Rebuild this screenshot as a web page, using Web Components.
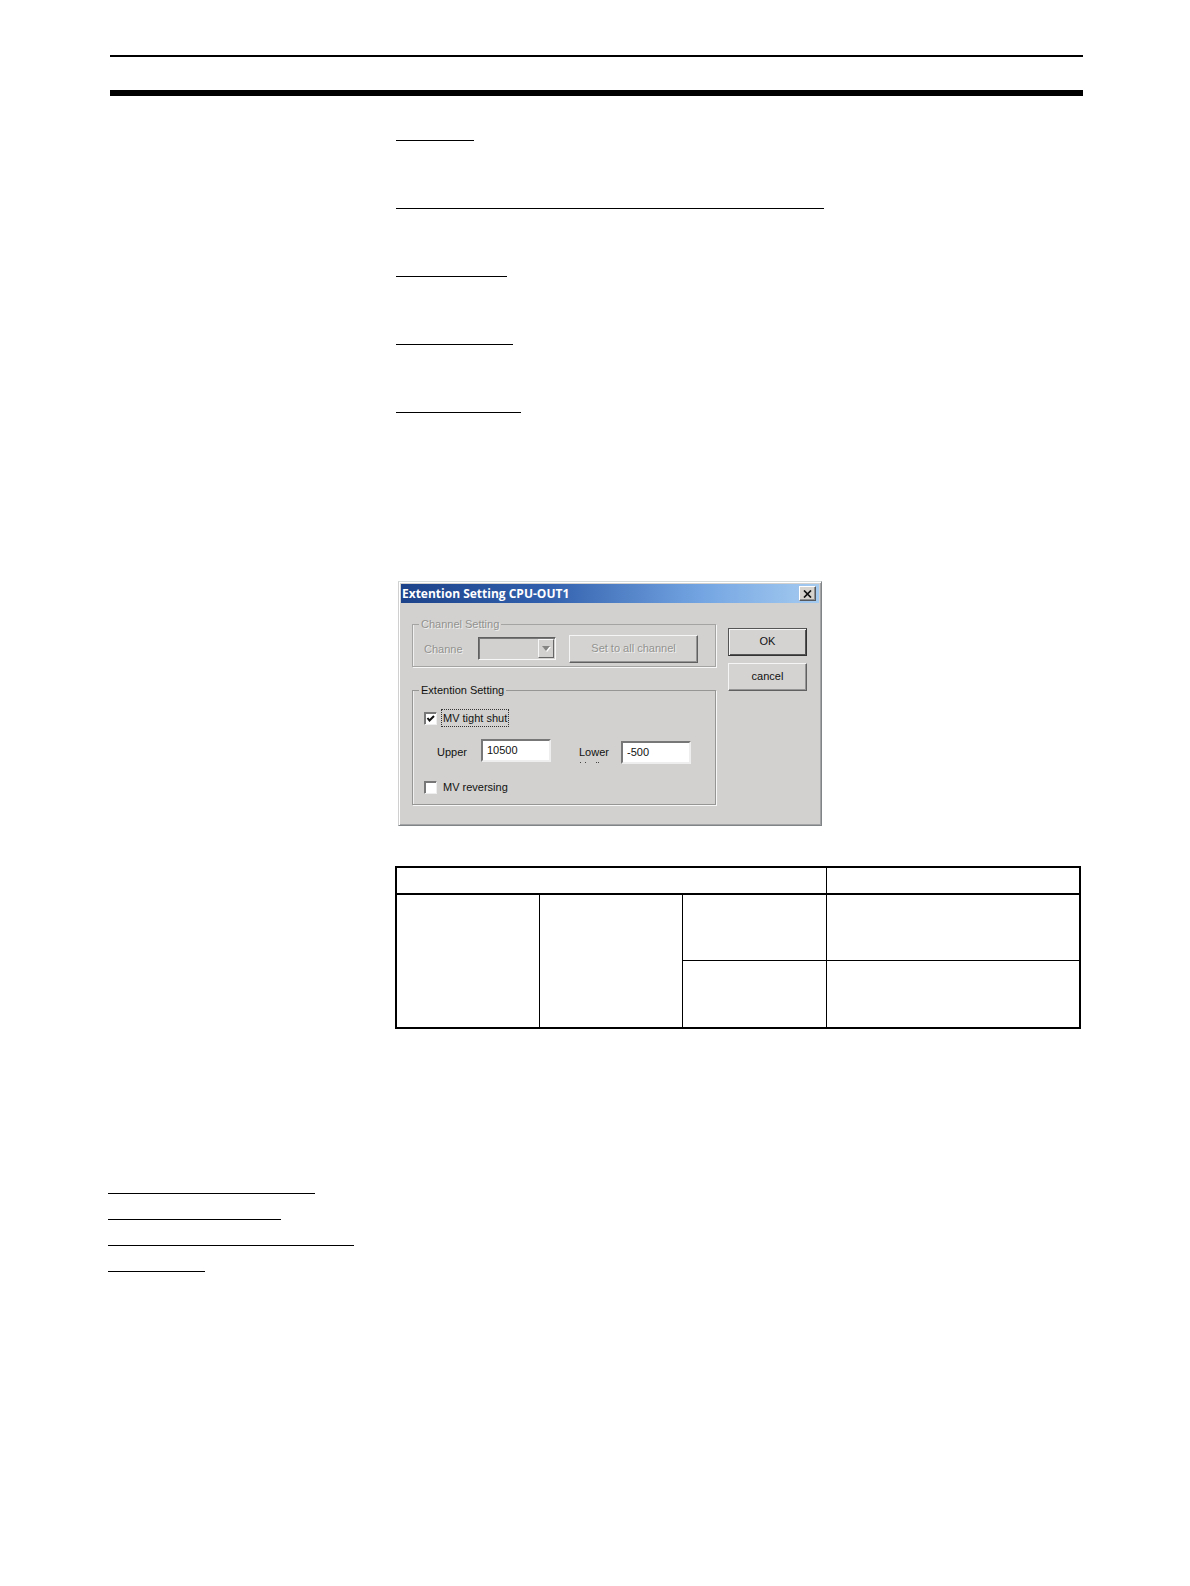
<!DOCTYPE html>
<html lang="en">
<head>
<meta charset="utf-8">
<title>Extention Setting</title>
<style>
body { margin: 0; background: #fff; color: #111; font: 11px/14px "Liberation Sans", Arial, sans-serif; }
</style>
</head>
<body>
<manual-page>
  <rule-list slot="side" gap="25" widths="207,173,246,97"></rule-list>
  <rule-list slot="top" gap="67" widths="78,428,111,117,125"></rule-list>
  <setting-dialog slot="figure" heading="Extention Setting CPU-OUT1">
    <group-box label="Channel Setting" muted>
      <channel-row></channel-row>
    </group-box>
    <group-box label="Extention Setting">
      <limit-form></limit-form>
    </group-box>
    <push-button slot="actions" primary>OK</push-button>
    <push-button slot="actions">cancel</push-button>
  </setting-dialog>
  <setting-table slot="table"></setting-table>
</manual-page>
<script>
function define(name, html, setup) {
  const template = document.createElement('template');
  template.innerHTML = html;
  customElements.define(name, class extends HTMLElement {
    constructor() {
      super();
      this.attachShadow({ mode: 'open' }).append(template.content.cloneNode(true));
    }
    connectedCallback() { if (setup) setup(this, this.shadowRoot); }
  });
}

define('manual-page', `
<style>
  :host { display: block; padding: 55px 107px 64px 108px; }
  header { margin-left: 2px; height: 33px; border-top: 2px solid #000; border-bottom: 6px solid #000; }
  main { display: grid; grid-template-columns: 287px 1fr; }
  .content { display: flex; flex-direction: column; padding: 44px 2px 0 0; }
  .top { padding-left: 1px; }
  .figure { padding: 168px 0 40px 3px; }
  .side { padding-top: 164px; }
</style>
<header></header>
<main>
  <span></span>
  <section class="content">
    <div class="top"><slot name="top"></slot></div>
    <div class="figure"><slot name="figure"></slot></div>
    <slot name="table"></slot>
  </section>
</main>
<div class="side"><slot name="side"></slot></div>`);

define('rule-list', `
<style>
  :host { display: flex; flex-direction: column; align-items: flex-start; }
  hr { margin: 0; border: 0; height: 1px; background: #000; max-width: 100%; }
</style>`, (host, root) => {
  host.style.gap = host.getAttribute('gap') + 'px';
  for (const width of host.getAttribute('widths').split(',')) {
    const rule = document.createElement('hr');
    rule.style.width = width + 'px';
    root.append(rule);
  }
});

define('setting-dialog', `
<style>
  :host { display: block; box-sizing: border-box; width: 424px; background: #d2d1cf;
    border: 1px solid; border-color: #d6dcdc #808487 #808487 #d0d0d0;
    box-shadow: inset 1px 1px #fff, inset -1px -1px #a2a4a6; padding: 2px; }
  header { display: flex; align-items: center; justify-content: space-between; height: 19px; padding: 0 3px 0 1px;
    background: linear-gradient(90deg, #1c438a, #3260ad 35%, #74a5e2 72%, #a5cbf0); }
  h1 { margin: 0; color: #fff; font: bold 12px/18px "Open Sans", "DejaVu Sans", sans-serif; }
  .close { display: flex; align-items: center; justify-content: center; box-sizing: border-box; width: 17px; height: 15px; padding: 0;
    background: #d6d3ce; border: 1px solid; border-color: #fff #55585c #55585c #fff; box-shadow: inset -1px -1px #909090; }
  .body { display: flex; gap: 12px; padding: 14px 12px 18px 11px; }
  .groups { flex: 1; display: flex; flex-direction: column; gap: 16px; }
  .actions { display: flex; flex-direction: column; gap: 7px; padding-top: 11px; width: 79px; }
</style>
<header><h1></h1><button class="close" aria-label="Close"><svg width="9" height="8" viewBox="0 0 9 8"><path d="M1 .5 8 7.5M8 .5 1 7.5" stroke="#111" stroke-width="1.7"/></svg></button></header>
<div class="body">
  <div class="groups"><slot></slot></div>
  <div class="actions"><slot name="actions"></slot></div>
</div>`, (host, root) => { root.querySelector('h1').textContent = host.getAttribute('heading'); });

define('group-box', `
<style>
  :host { display: block; }
  fieldset { margin: 0; min-width: 0; padding: 0 10px; border: 1px solid #969694; box-shadow: 1px 1px #f7f7f7, inset 1px 0 #f0f0f0; }
  legend { margin-left: -4px; padding: 0 2px; line-height: 14px; }
  :host([muted]) fieldset { border-color: #a4a4a2; }
  :host([muted]) legend { color: #92928f; text-shadow: 1px 1px #eee; }
</style>
<fieldset><legend></legend><slot></slot></fieldset>`, (host, root) => {
  root.querySelector('legend').textContent = host.getAttribute('label');
});

define('push-button', `
<style>
  :host { display: block; }
  button { display: block; box-sizing: border-box; width: 100%; height: 28px; padding: 0 0 2px; font: inherit; color: #111;
    background: #d4d3d1; border: 1px solid; border-color: #f5f5f5 #606060 #606060 #f5f5f5; box-shadow: inset -1px -1px #959595; }
  :host([primary]) button { border-color: #555 #333 #333 #555; box-shadow: inset 1px 1px #f5f5f5, inset -1px -1px #555; }
  button:disabled { color: #92928f; text-shadow: 1px 1px #f0f0f0; }
</style>
<button><slot></slot></button>`, (host, root) => {
  root.querySelector('button').disabled = host.hasAttribute('disabled');
});

define('channel-row', `
<style>
  :host { display: flex; align-items: center; height: 35px; color: #92928f; }
  label { width: 38px; margin: 0 16px 0 1px; white-space: nowrap; text-shadow: 1px 1px #eee; }
  .combo { display: flex; align-items: center; box-sizing: border-box; width: 78px; height: 23px; padding-right: 1px;
    border: 1px solid; border-color: #606060 #f7f7f7 #f7f7f7 #606060; box-shadow: inset 1px 1px #777; }
  select { appearance: none; flex: 1; min-width: 0; height: 19px; border: 0; background: none; opacity: 1; }
  .arrow { display: flex; align-items: center; justify-content: center; box-sizing: border-box; width: 16px; height: 19px;
    border: 1px solid; border-color: #f7f7f7 #666 #666 #f7f7f7; }
  push-button { flex: none; width: 129px; margin-left: 13px; }
</style>
<label for="channel">Channe</label>
<span class="combo"><select id="channel" disabled></select><span class="arrow"><svg width="9" height="6" viewBox="0 0 9 6"><path d="M1 1h8L5 6z" fill="#fff"/><path d="M0 0h8L4 5z" fill="#858583"/></svg></span></span>
<push-button disabled>Set to all channel</push-button>`);

define('limit-form', `
<style>
  :host { display: block; padding: 12px 0 8px 1px; }
  .check { display: flex; align-items: center; gap: 5px; height: 18px; }
  .check input { appearance: none; box-sizing: border-box; width: 13px; height: 13px; margin: 0; background: #fff;
    border: 1px solid; border-color: #777 #eee #eee #777; box-shadow: inset 1px 1px #777; }
  .box { display: grid; }
  .box > * { grid-area: 1 / 1; }
  .box svg { pointer-events: none; }
  .check label { padding: 1px; line-height: 14px; }
  .focus { outline: 1px dotted #333; }
  .limits { display: flex; padding: 12px 0 14px 13px; }
  .limits label { width: 44px; padding-top: 6px; }
  .limits label + input { flex: none; }
  .limits .lower { width: 42px; margin-left: 28px; }
  .lower svg { display: block; margin-top: 3px; }
  .limits input { box-sizing: border-box; width: 70px; height: 23px; margin: 0; padding: 0 0 2px 4px; font: inherit; color: #111; background: #fff;
    border: 2px solid; border-color: #777 #eee #eee #777; border-radius: 0; }
  .limits .low { margin-top: 2px; }
</style>
<div class="check"><span class="box"><input type="checkbox" id="tight" checked><svg width="13" height="13" viewBox="0 0 13 13"><path d="m3.500 6 2 2.500 4.500-4.500" fill="none" stroke="#111" stroke-width="2"/></svg></span><label class="focus" for="tight">MV tight shut</label></div>
<div class="limits">
  <label for="upper">Upper</label><input id="upper" value="10500">
  <label class="lower" for="lower">Lower<svg width="30" height="2" viewBox="0 0 30 2"><path d="M1 .5h1M6 .5h1M17 .5h1M19 .5h1" stroke="#444"/></svg></label><input class="low" id="lower" value="-500">
</div>
<div class="check"><input type="checkbox" id="reverse"><label for="reverse">MV reversing</label></div>`);

define('setting-table', `
<style>
  :host { display: block; }
  table { width: 100%; table-layout: fixed; border: 2px solid #000; border-spacing: 0; box-sizing: border-box; }
  col.key { width: 21%; }
  th, td { box-sizing: border-box; padding: 0; border: 0 solid #000; border-right-width: 1px; }
  th { height: 27px; border-bottom-width: 2px; }
  td { height: 66px; }
  th:last-child, td:last-child { border-right-width: 0; }
  .split td:nth-child(n+3) { border-bottom-width: 1px; }
</style>
<table>
  <colgroup><col class="key"><col class="key"><col class="key"><col></colgroup>
  <thead><tr><th colspan="3"></th><th></th></tr></thead>
  <tbody>
    <tr class="split"><td rowspan="2"></td><td rowspan="2"></td><td></td><td></td></tr>
    <tr><td></td><td></td></tr>
  </tbody>
</table>`);
</script>
</body>
</html>
